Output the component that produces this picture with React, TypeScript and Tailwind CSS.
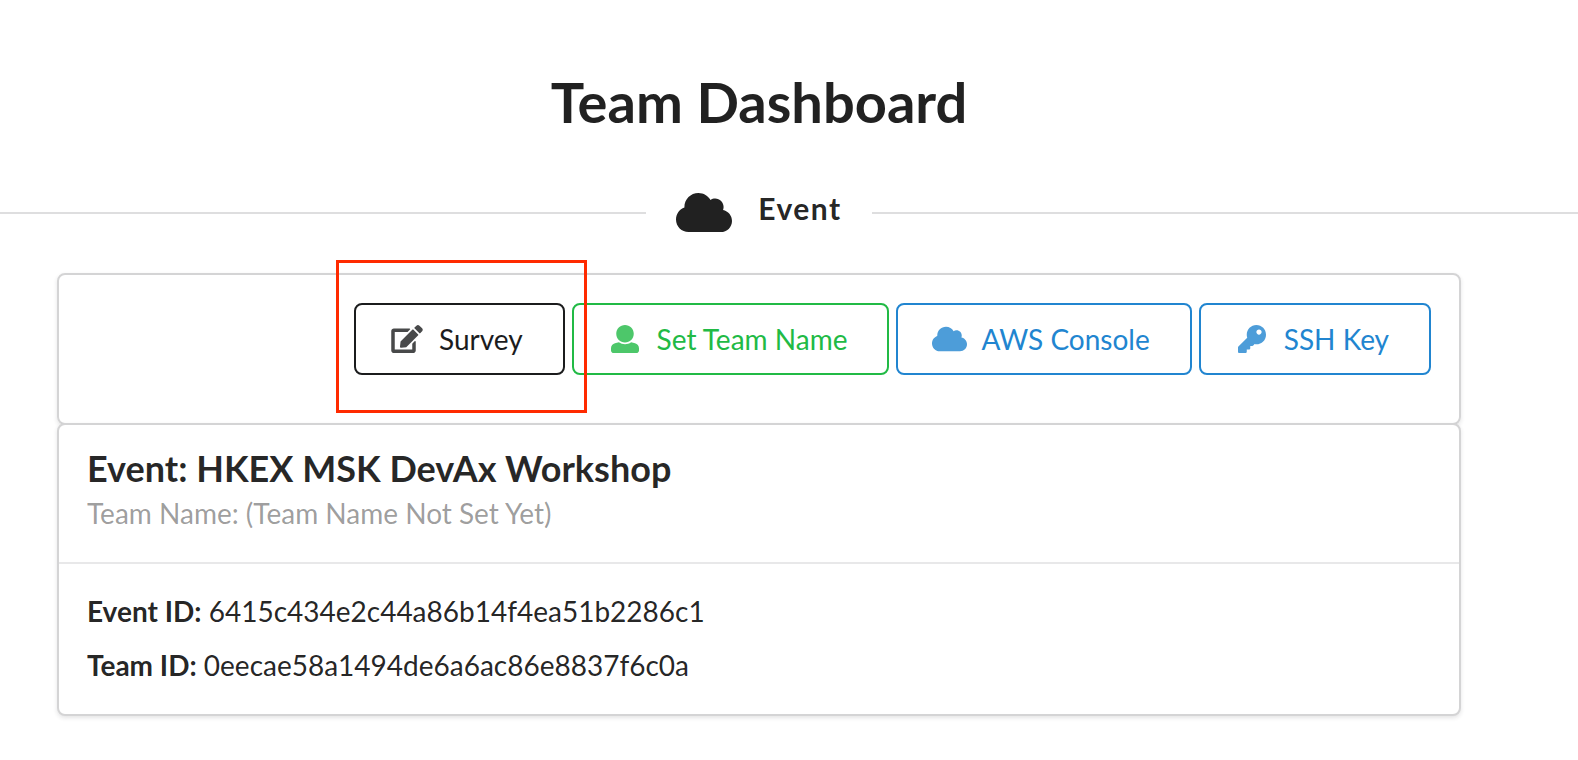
import type { ReactNode } from "react";
import { FaCloud, FaEdit, FaKey } from "react-icons/fa";

function UserIcon() {
  return (
    <svg viewBox="0 0 512 512" className="size-7" fill="currentColor" aria-hidden="true">
      <path d="M256 0c88.366 0 160 71.634 160 160s-71.634 160-160 160S96 248.366 96 160 167.634 0 256 0zm183.283 333.821l-71.313-17.828c-74.923 53.89-165.738 41.864-223.94 0l-71.313 17.828C29.981 344.505 0 382.903 0 426.955V464c0 26.51 21.49 48 48 48h416c26.51 0 48-21.49 48-48v-37.045c0-44.052-29.981-82.45-72.717-93.134z" />
    </svg>
  );
}

function ActionButton({ icon, label, tone }: { icon: ReactNode; label: string; tone: string }) {
  return (
    <button
      type="button"
      className={`flex h-[72px] items-center gap-4 rounded-lg border-2 border-current bg-transparent pr-10 pl-[35px] whitespace-nowrap ${tone}`}
    >
      <span className="flex w-8 shrink-0 justify-center text-[28px] opacity-80">{icon}</span>
      <span>{label}</span>
    </button>
  );
}

export default function App() {
  return (
    <main className="overflow-x-hidden bg-white pt-[66px] pb-11 font-['Lato',sans-serif] text-[28px] leading-10 text-black/87">
      <h1 className="pr-[60px] text-center text-[56px] leading-[72px] font-bold">Team Dashboard</h1>

      <div className="mt-[51px] flex items-center">
        <div className="h-[2px] grow basis-0 bg-[#dededf]" />
        <h4 className="flex h-12 items-center gap-[26px] px-[30px] pb-[2px] text-[30px] font-bold tracking-wider">
          <FaCloud className="h-[45px] w-[56px]" aria-hidden="true" />
          <span className="pb-2">Event</span>
        </h4>
        <div className="h-[2px] grow basis-[60px] bg-[#dededf]" />
      </div>

      <div className="mt-9 mr-[117px] ml-[57px]">
        <section className="flex justify-end gap-[7px] rounded-lg border-2 border-[#d4d4d5] px-7 pt-7 pb-12 shadow-[0_2px_4px_rgba(34,36,38,0.12)]">
          <div className="relative">
            <ActionButton icon={<FaEdit className="w-8" />} label="Survey" tone="text-[#1b1c1d]" />
            <div className="pointer-events-none absolute -top-[43px] -right-[22px] -bottom-[38px] -left-[18px] border-3 border-[#ff2a00]" />
          </div>
          <ActionButton icon={<UserIcon />} label="Set Team Name" tone="text-[#21ba45]" />
          <ActionButton icon={<FaCloud className="w-[35px] shrink-0" />} label="AWS Console" tone="text-[#2185d0]" />
          <ActionButton icon={<FaKey />} label="SSH Key" tone="text-[#2185d0]" />
        </section>

        <section className="-mt-[2px] rounded-lg border-2 border-[#d4d4d5] bg-white shadow-[0_2px_4px_rgba(34,36,38,0.12)]">
          <header className="border-b-2 border-[#e8e8e9] px-7 pt-[21px] pb-[29px]">
            <h2 className="text-[36px] leading-[44px] font-bold text-black/85">Event: HKEX MSK DevAx Workshop</h2>
            <p className="mt-[3px] text-black/40">Team Name: (Team Name Not Set Yet)</p>
          </header>
          <div className="flex flex-col gap-[14px] px-7 pt-[27px] pb-[29px]">
            <p>
              <b>Event ID:</b> 6415c434e2c44a86b14f4ea51b2286c1
            </p>
            <p>
              <b>Team ID:</b> 0eecae58a1494de6a6ac86e8837f6c0a
            </p>
          </div>
        </section>
      </div>
    </main>
  );
}
